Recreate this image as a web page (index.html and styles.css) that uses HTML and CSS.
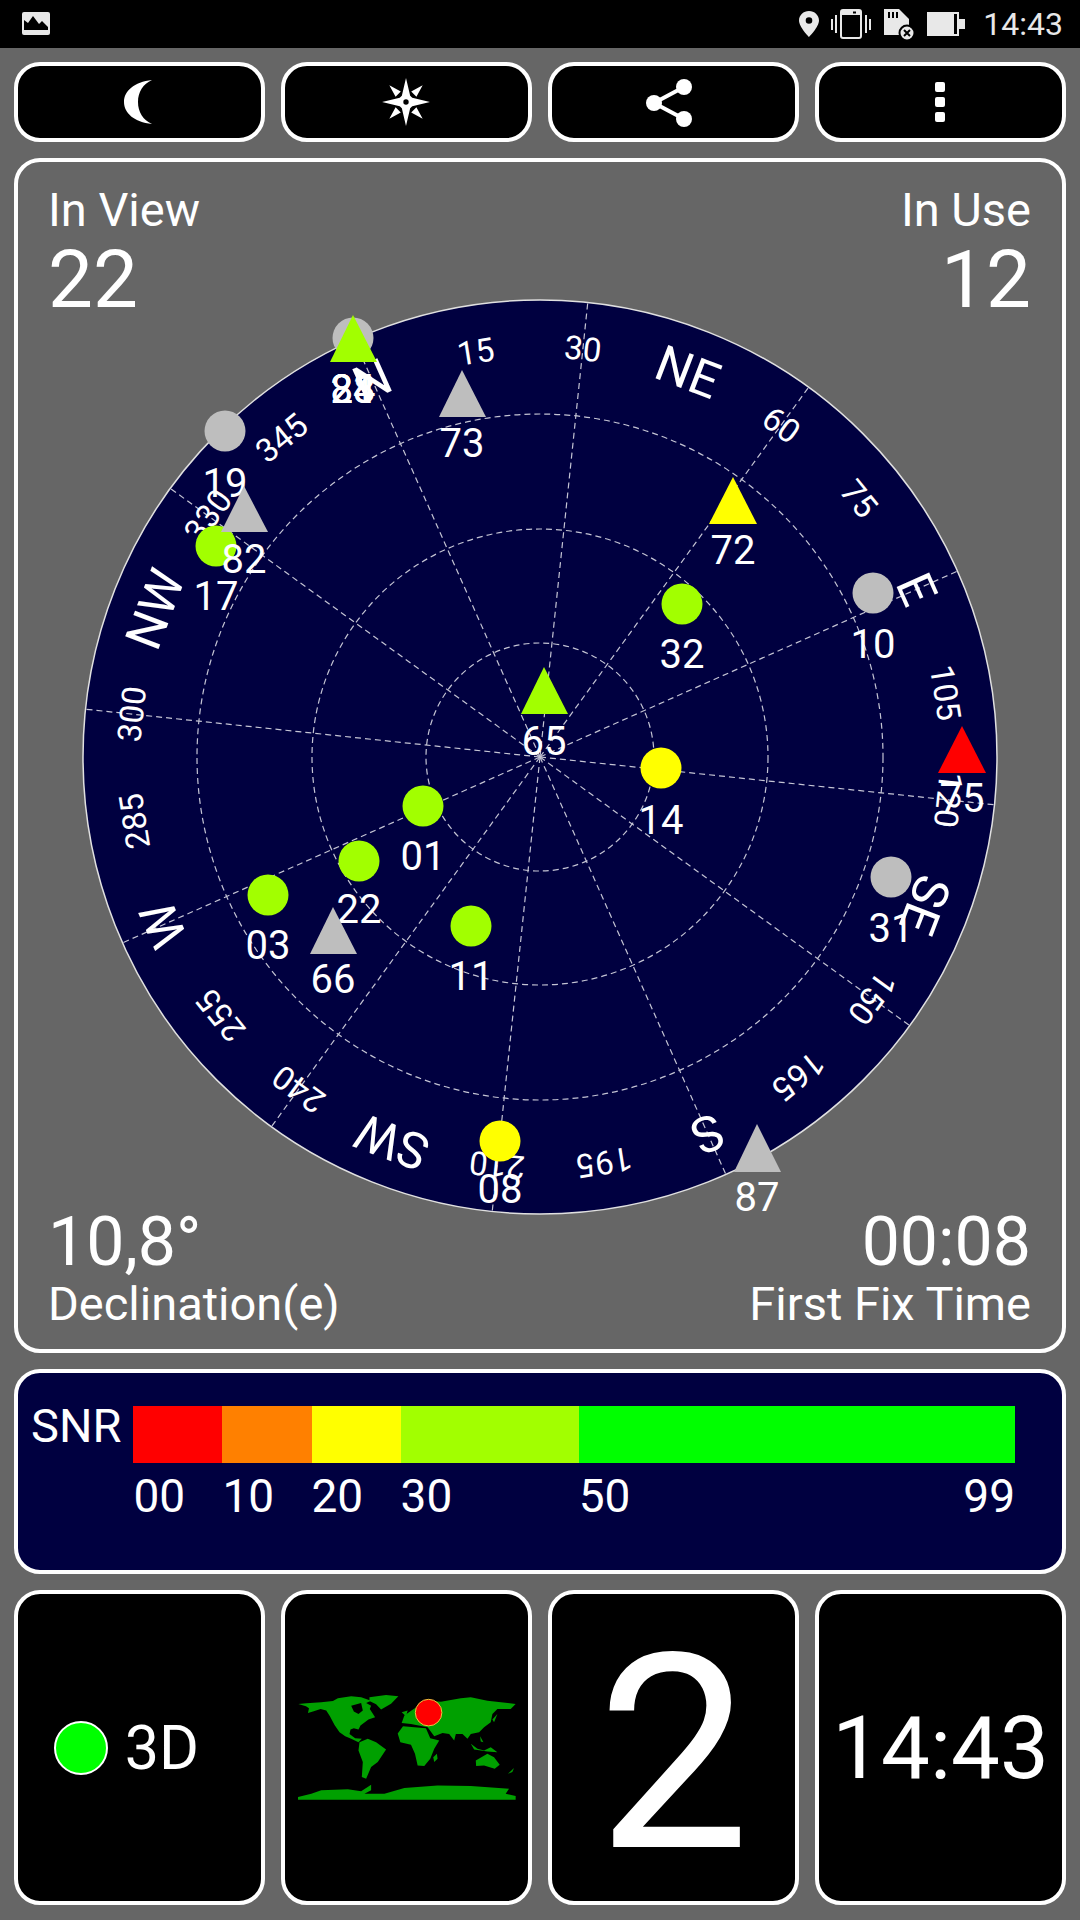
FILE: index.html
```html
<!DOCTYPE html>
<html lang="en">
<head>
  <meta charset="UTF-8">
  <meta name="viewport" content="width=device-width, initial-scale=1.0">
  <title>GPS Status</title>
  <link rel="stylesheet" href="styles.css">
</head>
<body>
  <div class="statusbar">
    <svg class="ic-image" viewBox="0 0 28 23"><rect width="28" height="23" rx="2" fill="#e8e8e8"/><path d="M2 18V8l4 3 5-7 6 8 3-3 6 6v3z" fill="#000"/></svg>
    <div class="status-right">
      <svg class="ic-pin" viewBox="0 0 20 26"><path fill-rule="evenodd" d="M10 0C4.500 0 0 4.200 0 9.500 0 16 10 26 10 26s10-10 10-16.500C20 4.200 15.500 0 10 0zm0 6.200a3.300 3.300 0 1 1 0 6.600 3.300 3.300 0 0 1 0-6.600z" fill="#e8e8e8"/></svg>
      <svg class="ic-vibrate" viewBox="0 0 40 30"><g fill="#e8e8e8"><rect x="0" y="10" width="2" height="11"/><rect x="4" y="6" width="2" height="18"/><rect x="34" y="6" width="2" height="18"/><rect x="38" y="10" width="2" height="11"/></g><rect x="10" y="1" width="20" height="28" rx="2" fill="none" stroke="#e8e8e8" stroke-width="2"/><rect x="10" y="1" width="20" height="5" fill="#e8e8e8"/><rect x="22" y="2.500" width="3" height="2" fill="#000"/></svg>
      <svg class="ic-sd" viewBox="0 0 32 32"><path d="M1 0h15l10 10v16H1z" fill="#e8e8e8"/><g fill="#000"><rect x="5" y="3" width="2" height="6"/><rect x="9" y="3" width="2" height="6"/><rect x="13" y="3" width="2" height="6"/></g><circle cx="24" cy="24" r="7.500" fill="#e8e8e8" stroke="#000" stroke-width="2"/><path d="M21 21l6 6m0-6l-6 6" stroke="#000" stroke-width="2"/></svg>
      <svg class="ic-battery" viewBox="0 0 38 24"><path d="M0 0h32v24H0z" fill="#e8e8e8"/><rect x="27" y="2" width="3" height="20" fill="#000"/><rect x="32" y="7" width="6" height="10" fill="#e8e8e8"/></svg>
      <span class="clock">14:43</span>
    </div>
  </div>

  <div class="content">
    <div class="row-four toolbar">
      <div class="tile"><svg class="ic-moon" viewBox="0 0 30 46"><path d="M28 1C10 3 0 12 0 23c0 11 10 20 28 22-9-4-14-12-14-22S19 5 28 1z" fill="#fff"/></svg></div>
      <div class="tile"><svg class="ic-star" viewBox="-24 -24 48 48"><path d="M0-23L4-6 6-4 23 0 6 4 4 6 0 23-4 6-6 4-23 0-6-4-4-6z" fill="#fff"/><path d="M16-16L10-5 5-10zM16 16L5 10 10 5zM-16 16L-10 5-5 10zM-16-16L-5-10-10-5z" fill="#fff"/><circle r="2.600" fill="#000"/></svg></div>
      <div class="tile"><svg class="ic-share" viewBox="0 0 46 48"><path d="M38 8L8 24l30 16" fill="none" stroke="#fff" stroke-width="4"/><circle cx="38" cy="8" r="8" fill="#fff"/><circle cx="8" cy="24" r="8" fill="#fff"/><circle cx="38" cy="40" r="8" fill="#fff"/></svg></div>
      <div class="tile"><div class="dots"><i></i><i></i><i></i></div></div>
    </div>

    <div class="sky-panel">
      <svg class="sky" viewBox="18 162 1044 1187">
        <circle class="dial" cx="540" cy="757" r="457"/>
        <g class="grid">
          <circle cx="540" cy="757" r="114"/>
          <circle cx="540" cy="757" r="228"/>
          <circle cx="540" cy="757" r="343"/>
        </g>
        <g transform="rotate(-24 540 757)">
          <g class="grid">
            <line x1="540" y1="757" x2="540" y2="300"/>
            <line x1="540" y1="757" x2="540" y2="300" transform="rotate(30 540 757)"/>
            <line x1="540" y1="757" x2="540" y2="300" transform="rotate(60 540 757)"/>
            <line x1="540" y1="757" x2="540" y2="300" transform="rotate(90 540 757)"/>
            <line x1="540" y1="757" x2="540" y2="300" transform="rotate(120 540 757)"/>
            <line x1="540" y1="757" x2="540" y2="300" transform="rotate(150 540 757)"/>
            <line x1="540" y1="757" x2="540" y2="300" transform="rotate(180 540 757)"/>
            <line x1="540" y1="757" x2="540" y2="300" transform="rotate(210 540 757)"/>
            <line x1="540" y1="757" x2="540" y2="300" transform="rotate(240 540 757)"/>
            <line x1="540" y1="757" x2="540" y2="300" transform="rotate(270 540 757)"/>
            <line x1="540" y1="757" x2="540" y2="300" transform="rotate(300 540 757)"/>
            <line x1="540" y1="757" x2="540" y2="300" transform="rotate(330 540 757)"/>
          </g>
          <g class="tick">
            <text x="540" y="358" transform="rotate(15 540 757)">15</text>
            <text x="540" y="358" transform="rotate(30 540 757)">30</text>
            <text x="540" y="358" transform="rotate(60 540 757)">60</text>
            <text x="540" y="358" transform="rotate(75 540 757)">75</text>
            <text x="540" y="358" transform="rotate(105 540 757)">105</text>
            <text x="540" y="358" transform="rotate(120 540 757)">120</text>
            <text x="540" y="358" transform="rotate(150 540 757)">150</text>
            <text x="540" y="358" transform="rotate(165 540 757)">165</text>
            <text x="540" y="358" transform="rotate(195 540 757)">195</text>
            <text x="540" y="358" transform="rotate(210 540 757)">210</text>
            <text x="540" y="358" transform="rotate(240 540 757)">240</text>
            <text x="540" y="358" transform="rotate(255 540 757)">255</text>
            <text x="540" y="358" transform="rotate(285 540 757)">285</text>
            <text x="540" y="358" transform="rotate(300 540 757)">300</text>
            <text x="540" y="358" transform="rotate(330 540 757)">330</text>
            <text x="540" y="358" transform="rotate(345 540 757)">345</text>
          </g>
          <g class="compass">
            <text x="540" y="362">N</text>
            <text x="540" y="362" transform="rotate(45 540 757)">NE</text>
            <text x="540" y="362" transform="rotate(90 540 757)">E</text>
            <text x="540" y="362" transform="rotate(135 540 757)">SE</text>
            <text x="540" y="362" transform="rotate(180 540 757)">S</text>
            <text x="540" y="362" transform="rotate(225 540 757)">SW</text>
            <text x="540" y="362" transform="rotate(270 540 757)">W</text>
            <text x="540" y="362" transform="rotate(315 540 757)">NW</text>
          </g>
        </g>

        <!-- circles first, triangles land on top of them -->
        <g class="sats">
          <circle class="gray" cx="353" cy="338" r="20.500"/>
          <circle class="gray" cx="225" cy="431" r="20.500"/><text x="225" y="497">19</text>
          <circle class="lime" cx="216" cy="546" r="20.500"/><text x="216" y="610">17</text>
          <circle class="lime" cx="682" cy="604" r="20.500"/><text x="682" y="668">32</text>
          <circle class="gray" cx="873" cy="593" r="20.500"/><text x="873" y="658">10</text>
          <circle class="yellow" cx="661" cy="768" r="20.500"/><text x="661" y="834">14</text>
          <circle class="gray" cx="891" cy="877" r="20.500"/><text x="891" y="942">31</text>
          <circle class="lime" cx="423" cy="806" r="20.500"/><text x="423" y="870">01</text>
          <circle class="lime" cx="359" cy="861" r="20.500"/><text x="359" y="923">22</text>
          <circle class="lime" cx="268" cy="895" r="20.500"/><text x="268" y="959">03</text>
          <circle class="lime" cx="471" cy="926" r="20.500"/><text x="471" y="990">11</text>
          <circle class="yellow" cx="500" cy="1141" r="20.500"/><text x="500" y="1203">08</text>

          <polygon class="lime" points="353,315 330,362 377,362"/>
          <text x="353" y="403">23</text><text x="353" y="403">24</text><text x="353" y="403">81</text><text x="353" y="403">88</text>
          <polygon class="gray" points="462,370 439,417 486,417"/><text x="462" y="457">73</text>
          <polygon class="gray" points="244,486 221,532 268,532"/><text x="244" y="573">82</text>
          <polygon class="lime" points="544,667 521,714 568,714"/><text x="544" y="755">65</text>
          <polygon class="yellow" points="733,477 709,524 757,524"/><text x="733" y="564">72</text>
          <polygon class="red" points="962,726 938,773 986,773"/><text x="962" y="812">75</text>
          <polygon class="gray" points="333,907 310,954 357,954"/><text x="333" y="993">66</text>
          <polygon class="gray" points="757,1124 734,1172 781,1172"/><text x="757" y="1211">87</text>
        </g>
      </svg>

      <div class="readout-row head">
        <div class="readout"><div class="label">In View</div><div class="value">22</div></div>
        <div class="readout end"><div class="label">In Use</div><div class="value">12</div></div>
      </div>
      <div class="readout-row foot">
        <div class="readout"><div class="value">10,8°</div><div class="label">Declination(e)</div></div>
        <div class="readout end"><div class="value">00:08</div><div class="label">First Fix Time</div></div>
      </div>
    </div>

    <div class="snr-panel">
      <div class="snr-name">SNR</div>
      <div class="snr-scale">
        <div class="snr-bar">
          <div class="seg s-red"></div>
          <div class="seg s-orange"></div>
          <div class="seg s-yellow"></div>
          <div class="seg s-lime"></div>
          <div class="seg s-green"></div>
        </div>
        <div class="snr-labels">
          <span class="s-red">00</span>
          <span class="s-orange">10</span>
          <span class="s-yellow">20</span>
          <span class="s-lime">30</span>
          <span class="s-green">50</span>
          <span class="top">99</span>
        </div>
      </div>
    </div>

    <div class="row-four bottom">
      <div class="tile fix"><div class="fix-dot"></div><span>3D</span></div>
      <div class="tile">
        <svg class="map" viewBox="80 108 656 316">
          <g fill="#00a000">
            <path d="M81 135L105 133 150 130 185 126 200 118 240 112 270 115 300 125 285 132 300 140 296 150 312 175 292 182 268 200 262 212 248 208 238 212 235 225 252 238 272 240 262 250 240 240 222 232 205 220 190 198 176 172 165 155 148 150 125 158 110 162 113 148 104 142z"/>
            <path d="M295 115l50-7 37 4-22 22-30 18-15-16-20-10z"/>
            <path d="M265 250l25-10 25 10 30 22-25 38-20 15-15 35-13-5 3-45-13-35z"/>
            <path d="M396 202l-16 22 8 26 32 8 12 27 8 35 20 2 18-22 12-30 15-25-27-7-13-30-35-3z"/>
            <path d="M392 192l8-22 28-20 42-25 40 3 60-10 30-3 50 10 85 10-15 15-40 0-15 15-5 25-20 15-15 15-25 5-10 15-15-15-20 0-5 20-15-20-20-3-25 10-20-27-50-10z"/>
            <path d="M487 295l11-10 2 15-10 10z"/>
            <path d="M392 160l18-5-5 17z"/>
            <path d="M628 232l10 18-8-2zM600 255l20 15 20 5 20-10 20 15-30-2-40-6zM665 182l15-17-10 25z"/>
            <path d="M615 305l35-20 20 10 17 23-15 12-32-10-24 2z"/>
            <path d="M712 345l18-17-5 12z"/>
            <path d="M80 415l40-10 30-10 80-3 40 6 30-20v17l-20 10 60 0 60-17 100-8 100 2 115 8-10 15 30 7v11H80z"/>
          </g>
          <path d="M240 140l30-8 5 23-13 10-14-7z" fill="#000"/>
          <circle cx="473" cy="161" r="40" fill="#f00" stroke="#e8c840" stroke-width="3"/>
        </svg>
      </div>
      <div class="tile big-digit">2</div>
      <div class="tile time">14:43</div>
    </div>
  </div>
</body>
</html>
```

FILE: styles.css
```css
body {
  margin: 0;
  padding: 0;
  background-color: #666666;
  font-family: 'Roboto', 'Liberation Sans', sans-serif;
  color: #ffffff;
  overflow: hidden;
}

.statusbar {
  height: 48px;
  background-color: #000000;
  display: flex;
  align-items: center;
  justify-content: space-between;
  padding: 0 17px 0 22px;
}

.status-right {
  display: flex;
  align-items: center;
}

.ic-image { width: 28px; height: 23px; margin-top: -1px; }
.ic-pin { width: 20px; height: 26px; }
.ic-vibrate { width: 40px; height: 30px; margin-left: 12px; }
.ic-sd { width: 32px; height: 32px; margin-left: 12px; margin-top: 2px; }
.ic-battery { width: 38px; height: 24px; margin-left: 12px; }

.clock {
  font-size: 32px;
  color: #e8e8e8;
  margin-left: 18px;
}

.content {
  display: flex;
  flex-direction: column;
  gap: 16px;
  padding: 14px 14px 0;
}

.row-four {
  display: grid;
  grid-template-columns: repeat(4, 1fr);
  gap: 16px;
}

.tile {
  background-color: #000000;
  border: 4px solid #ffffff;
  border-radius: 26px;
  box-sizing: border-box;
  display: flex;
  align-items: center;
  justify-content: center;
}

.toolbar .tile { height: 80px; }

.ic-moon { width: 30px; height: 46px; margin-right: 2px; }
.ic-star { width: 50px; height: 50px; margin-right: 2px; }
.ic-share { width: 46px; height: 48px; margin: 2px 10px 0 0; }

.dots {
  display: flex;
  flex-direction: column;
  gap: 5px;
  margin-right: 2px;
}

.dots i {
  display: block;
  width: 10px;
  height: 10px;
  border-radius: 2px;
  background-color: #ffffff;
}

/* sky view */
.sky-panel {
  position: relative;
  height: 1195px;
  box-sizing: border-box;
  border: 4px solid #ffffff;
  border-radius: 26px;
  padding: 21px 31px 18px 30px;
  display: flex;
  flex-direction: column;
  justify-content: space-between;
}

.sky {
  position: absolute;
  top: 0;
  left: 0;
  width: 100%;
  height: 100%;
}

.dial {
  fill: #000040;
  stroke: #e0e0e0;
  stroke-width: 1.5;
}

.grid circle,
.grid line {
  fill: none;
  stroke: #c4c4d4;
  stroke-width: 1.2;
  stroke-dasharray: 6 4;
}

.tick text,
.compass text,
.sats text {
  fill: #ffffff;
  text-anchor: middle;
}

.tick text { font-size: 33px; }
.compass text { font-size: 50px; }
.sats text { font-size: 40px; }

.gray { fill: #bebebe; }
.lime { fill: #a2ff00; }
.yellow { fill: #ffff00; }
.red { fill: #ff0000; }

.readout-row {
  position: relative;
  display: flex;
  justify-content: space-between;
}

.readout.end { text-align: right; }
.label { font-size: 47px; line-height: 54px; }
.head .value { font-size: 80px; line-height: 86px; }
.foot .value { font-size: 68px; line-height: 70px; }

/* snr legend */
.snr-panel {
  height: 205px;
  box-sizing: border-box;
  background-color: #000040;
  border: 4px solid #ffffff;
  border-radius: 26px;
  padding: 33px 47px 0 13px;
  display: flex;
  gap: 12px;
}

.snr-name {
  font-size: 47px;
  line-height: 46px;
  margin-top: -3px;
}

.snr-scale { flex: 1; }

.snr-bar {
  display: flex;
  height: 57px;
}

.seg.s-red, .snr-labels .s-red { flex: 10; }
.seg.s-orange, .snr-labels .s-orange { flex: 10; }
.seg.s-yellow, .snr-labels .s-yellow { flex: 10; }
.seg.s-lime, .snr-labels .s-lime { flex: 20; }
.seg.s-green, .snr-labels .s-green { flex: 49; }

.seg.s-red { background-color: #ff0000; }
.seg.s-orange { background-color: #ff8000; }
.seg.s-yellow { background-color: #ffff00; }
.seg.s-lime { background-color: #a2ff00; }
.seg.s-green { background-color: #00ff00; }

.snr-labels {
  display: flex;
  font-size: 46px;
  line-height: 54px;
  margin-top: 6px;
  position: relative;
}

.snr-labels span { display: block; }

.snr-labels .top {
  position: absolute;
  right: 0;
  top: 0;
}

/* bottom tiles */
.bottom .tile { height: 315px; }

.fix {
  gap: 17px;
  font-size: 61px;
  padding-right: 26px;
}

.fix-dot {
  width: 54px;
  height: 54px;
  box-sizing: border-box;
  border-radius: 50%;
  background-color: #00ff00;
  border: 2px solid #ffffff;
}

.map { width: 218px; height: 105px; }

.big-digit {
  font-size: 272px;
  line-height: 1;
  padding-top: 12px;
}

.time { font-size: 87px; }
```
